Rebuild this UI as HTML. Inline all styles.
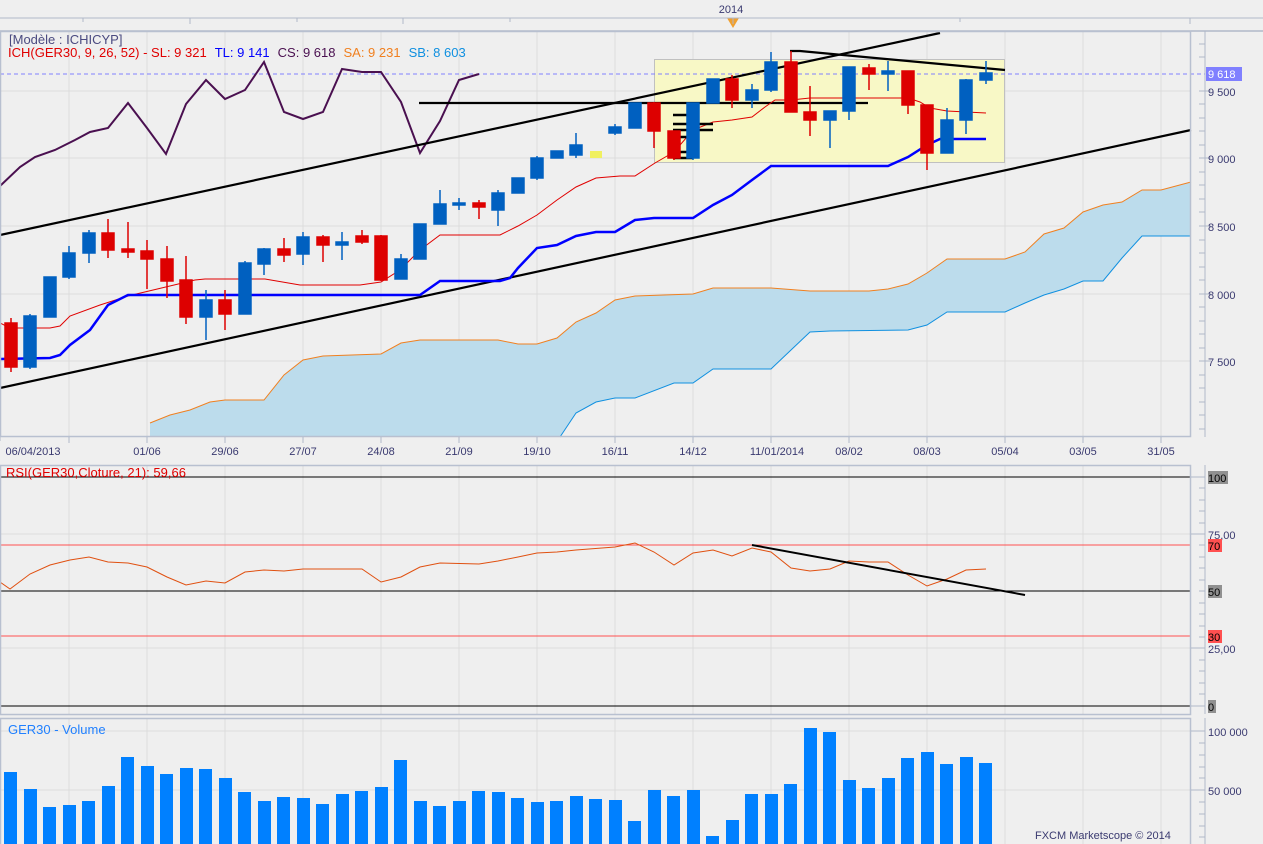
<!DOCTYPE html>
<html><head><meta charset="utf-8"><style>
html,body{margin:0;padding:0;background:#efefef;}
svg{display:block;font-family:"Liberation Sans",sans-serif;}
</style></head><body>
<svg width="1263" height="844" viewBox="0 0 1263 844" xmlns="http://www.w3.org/2000/svg">
<rect width="1263" height="844" fill="#efefef"/>
<!-- top ruler -->
<text x="731" y="13" font-size="11" fill="#3a3a70" text-anchor="middle">2014</text>
<path d="M727 18 L739 18 L733 28 Z" fill="#f0a030"/>
<line x1="0" y1="18" x2="1263" y2="18" stroke="#b0b8c8"/>
<line x1="0" y1="31" x2="1263" y2="31" stroke="#b0b8c8" stroke-width="1.5"/>
<g stroke="#b0b8c8"><line x1="83" y1="18" x2="83" y2="22"/><line x1="190" y1="18" x2="190" y2="24"/><line x1="297" y1="18" x2="297" y2="22"/><line x1="403" y1="18" x2="403" y2="24"/><line x1="510" y1="18" x2="510" y2="22"/><line x1="733" y1="18" x2="733" y2="24"/><line x1="960" y1="18" x2="960" y2="22"/><line x1="1190" y1="18" x2="1190" y2="24"/></g>

<!-- main panel grid -->
<g stroke="#dcdcdc" stroke-width="1">
<line x1="0" y1="91" x2="1191" y2="91"/><line x1="0" y1="158" x2="1191" y2="158"/><line x1="0" y1="226" x2="1191" y2="226"/><line x1="0" y1="294" x2="1191" y2="294"/><line x1="0" y1="361" x2="1191" y2="361"/>
<path d="M69 31V437M147 31V437M225 31V437M303 31V437M381 31V437M459 31V437M537 31V437M615 31V437M693 31V437M771 31V437M849 31V437M927 31V437M1005 31V437M1083 31V437M1161 31V437"/>
</g>
<!-- cloud -->
<polygon fill="#bcdcec" points="150,437 150,423 170,415 190,410 210,402 225,400 264,400 284,375 303,360 323,356 381,354 401,343 420,340 498,340 518,344 537,344 557,338 576,322 596,313 615,300 635,296 693,294 713,288 771,288 810,291 869,291 888,289 908,284 927,273 947,259 1005,259 1025,252 1044,234 1064,228 1083,212 1103,205 1122,202 1142,190 1161,190 1191,182 1191,236 1142,236 1122,258 1103,281 1083,281 1064,289 1044,295 1025,303 1005,312 947,312 927,325 908,330 830,331 810,332 791,350 771,369 713,369 693,383 674,383 635,398 615,398 596,402 576,413 560,437"/>
<polyline fill="none" stroke="#f08020" stroke-width="1" points="150,423 170,415 190,410 210,402 225,400 264,400 284,375 303,360 323,356 381,354 401,343 420,340 498,340 518,344 537,344 557,338 576,322 596,313 615,300 635,296 693,294 713,288 771,288 810,291 869,291 888,289 908,284 927,273 947,259 1005,259 1025,252 1044,234 1064,228 1083,212 1103,205 1122,202 1142,190 1161,190 1191,182"/>
<polyline fill="none" stroke="#1090e0" stroke-width="1" points="560,437 576,413 596,402 615,398 635,398 674,383 693,383 713,369 771,369 791,350 810,332 830,331 908,330 927,325 947,312 1005,312 1025,303 1044,295 1064,289 1083,281 1103,281 1122,258 1142,236 1191,236"/>
<!-- yellow box -->
<rect x="654.5" y="59.5" width="350" height="103" fill="#f8f8c6" stroke="#c0c0c0"/>
<!-- dashed current price -->
<line x1="0" y1="74" x2="1205" y2="74" stroke="#8080ff" stroke-dasharray="4,3"/>
<!-- chikou -->
<polyline fill="none" stroke="#4a1050" stroke-width="2" points="0,186 20,167 35,157 55,150 75,140 90,132 108,128 128,103 147,128 166,154 186,104 206,80 225,99 245,90 264,62 284,112 303,119 323,112 342,69 362,72 381,72 401,102 420,153 440,121 459,80 479,74"/>
<!-- trendlines -->
<g stroke="#000" stroke-width="2.2" fill="none">
<line x1="0" y1="235" x2="940" y2="33"/>
<line x1="0" y1="388" x2="1191" y2="130"/>
<line x1="419" y1="103" x2="868" y2="103"/>
<polyline points="790,51 800,51 1005,70"/>
</g>
<!-- tenkan -->
<polyline fill="none" stroke="#e00000" stroke-width="1" points="0,323 10,328 50,328 60,326 70,316 100,305 128,296 195,280 205,279 265,279 300,285 360,285 381,282 400,270 420,250 440,235 500,235 518,226 537,215 557,200 576,187 596,178 620,176 635,176 655,163 674,152 693,130 713,122 732,120 752,117 765,107 775,100 791,100 810,98 908,98 920,102 930,108 947,111 986,113"/>
<!-- kijun -->
<polyline fill="none" stroke="#0000ff" stroke-width="2.5" points="0,359 50,358 60,355 70,345 90,330 108,305 128,295 420,295 430,288 440,281 500,281 510,278 518,268 537,248 557,245 576,236 596,232 615,232 635,220 654,218 693,218 713,205 732,195 752,180 771,166 888,166 908,157 927,145 940,139 986,139"/>
<!-- horizontal ticks on candle -->
<g stroke="#000" stroke-width="2.5"><path d="M673 115h20M673 124h40M673 130h40M673 137h20M673 152h20M673 158h20"/></g>
<!-- candles -->
<g stroke-width="1.5">
<g fill="#dd0000" stroke="#dd0000">
<line x1="11" y1="318" x2="11" y2="372"/><rect x="5" y="323" width="12" height="44"/>
<line x1="128" y1="222" x2="128" y2="258"/><rect x="122" y="249" width="12" height="3"/>
<line x1="147" y1="240" x2="147" y2="289"/><rect x="141" y="251" width="12" height="8"/>
<line x1="167" y1="246" x2="167" y2="298"/><rect x="161" y="259" width="12" height="22"/>
<line x1="186" y1="256" x2="186" y2="324"/><rect x="180" y="280" width="12" height="37"/>
<line x1="225" y1="290" x2="225" y2="330"/><rect x="219" y="300" width="12" height="14"/>
<line x1="108" y1="219" x2="108" y2="258"/><rect x="102" y="233" width="12" height="17"/>
<line x1="284" y1="238" x2="284" y2="262"/><rect x="278" y="249" width="12" height="6"/>
<line x1="323" y1="235" x2="323" y2="262"/><rect x="317" y="237" width="12" height="8"/>
<line x1="362" y1="230" x2="362" y2="244"/><rect x="356" y="236" width="12" height="6"/>
<line x1="381" y1="235" x2="381" y2="281"/><rect x="375" y="236" width="12" height="44"/>
<line x1="479" y1="200" x2="479" y2="219"/><rect x="473" y="203" width="12" height="4"/>
<line x1="654" y1="102" x2="654" y2="148"/><rect x="648" y="103" width="12" height="28"/>
<line x1="674" y1="131" x2="674" y2="160"/><rect x="668" y="131" width="12" height="27"/>
<line x1="732" y1="75" x2="732" y2="108"/><rect x="726" y="79" width="12" height="21"/>
<line x1="791" y1="51" x2="791" y2="112"/><rect x="785" y="62" width="12" height="50"/>
<line x1="810" y1="86" x2="810" y2="136"/><rect x="804" y="112" width="12" height="8"/>
<line x1="869" y1="64" x2="869" y2="90"/><rect x="863" y="68" width="12" height="6"/>
<line x1="908" y1="71" x2="908" y2="114"/><rect x="902" y="71" width="12" height="34"/>
<line x1="927" y1="105" x2="927" y2="170"/><rect x="921" y="105" width="12" height="48"/>
</g>
<g fill="#0060c0" stroke="#0060c0">
<line x1="30" y1="314" x2="30" y2="369"/><rect x="24" y="316" width="12" height="51"/>
<rect x="44" y="277" width="12" height="40"/>
<line x1="69" y1="246" x2="69" y2="279"/><rect x="63" y="253" width="12" height="24"/>
<line x1="89" y1="230" x2="89" y2="263"/><rect x="83" y="233" width="12" height="20"/>
<line x1="206" y1="290" x2="206" y2="340"/><rect x="200" y="300" width="12" height="17"/>
<line x1="245" y1="261" x2="245" y2="314"/><rect x="239" y="263" width="12" height="51"/>
<line x1="264" y1="248" x2="264" y2="275"/><rect x="258" y="249" width="12" height="15"/>
<line x1="303" y1="232" x2="303" y2="265"/><rect x="297" y="237" width="12" height="17"/>
<line x1="342" y1="232" x2="342" y2="260"/><rect x="336" y="242" width="12" height="3"/>
<line x1="401" y1="254" x2="401" y2="278"/><rect x="395" y="259" width="12" height="20"/>
<rect x="414" y="224" width="12" height="35"/>
<line x1="440" y1="190" x2="440" y2="224"/><rect x="434" y="204" width="12" height="20"/>
<line x1="459" y1="198" x2="459" y2="210"/><rect x="453" y="203" width="12" height="2"/>
<line x1="498" y1="190" x2="498" y2="226"/><rect x="492" y="193" width="12" height="17"/>
<rect x="512" y="178" width="12" height="15"/>
<line x1="537" y1="156" x2="537" y2="180"/><rect x="531" y="158" width="12" height="20"/>
<rect x="551" y="151" width="12" height="7"/>
<line x1="576" y1="133" x2="576" y2="158"/><rect x="570" y="145" width="12" height="10"/>
<line x1="615" y1="124" x2="615" y2="135"/><rect x="609" y="127" width="12" height="6"/>
<rect x="629" y="103" width="12" height="25"/>
<line x1="693" y1="103" x2="693" y2="160"/><rect x="687" y="103" width="12" height="55"/>
<rect x="707" y="79" width="12" height="24"/>
<line x1="752" y1="84" x2="752" y2="108"/><rect x="746" y="90" width="12" height="10"/>
<line x1="771" y1="52" x2="771" y2="92"/><rect x="765" y="62" width="12" height="28"/>
<line x1="830" y1="111" x2="830" y2="148"/><rect x="824" y="111" width="12" height="9"/>
<line x1="849" y1="67" x2="849" y2="120"/><rect x="843" y="67" width="12" height="44"/>
<line x1="888" y1="61" x2="888" y2="91"/><rect x="882" y="71" width="12" height="3"/>
<line x1="947" y1="108" x2="947" y2="153"/><rect x="941" y="120" width="12" height="33"/>
<line x1="966" y1="79" x2="966" y2="134"/><rect x="960" y="80" width="12" height="40"/>
<line x1="986" y1="61" x2="986" y2="84"/><rect x="980" y="73" width="12" height="7"/>
</g>
<rect x="590" y="151" width="12" height="7" fill="#f0f060" stroke="none"/>
</g>
<!-- labels -->
<text x="9" y="44" font-size="13" fill="#4a4a80">[Modèle : ICHICYP]</text>
<text x="8" y="57" font-size="13"><tspan fill="#e00000">ICH(GER30, 9, 26, 52) -  SL: 9 321</tspan><tspan fill="#0000ff" dx="8">TL: 9 141</tspan><tspan fill="#4a1050" dx="8">CS: 9 618</tspan><tspan fill="#f08020" dx="8">SA: 9 231</tspan><tspan fill="#1090e0" dx="8">SB: 8 603</tspan></text>
<!-- main frame -->
<rect x="0.5" y="31.5" width="1190" height="405" fill="none" stroke="#b8c0d0" stroke-width="1.5"/>
<!-- right axis main -->
<line x1="1205" y1="31" x2="1205" y2="437" stroke="#b0b8c8"/>
<g stroke="#b0b8c8"><path d="M1199 91h12M1199 158h12M1199 226h12M1199 294h12M1199 361h12M1199 44h6M1199 57h6M1199 104h6M1199 118h6M1199 131h6M1199 145h6M1199 172h6M1199 185h6M1199 199h6M1199 212h6M1199 240h6M1199 253h6M1199 267h6M1199 280h6M1199 307h6M1199 321h6M1199 334h6M1199 348h6M1199 375h6M1199 388h6M1199 402h6M1199 415h6M1199 429h6"/></g>
<rect x="1206" y="67" width="36" height="14" fill="#8080ff"/>
<text x="1208" y="78" font-size="11" fill="#fff">9 618</text>
<g font-size="11" fill="#3a3a70"><text x="1208" y="96">9 500</text><text x="1208" y="163">9 000</text><text x="1208" y="231">8 500</text><text x="1208" y="299">8 000</text><text x="1208" y="366">7 500</text></g>
<!-- date axis -->
<g stroke="#b0b8c8"><path d="M0 437V441M69 437V443M147 437V443M225 437V443M303 437V443M381 437V443M459 437V443M537 437V443M615 437V443M693 437V443M771 437V443M849 437V443M927 437V443M1005 437V443M1083 437V443M1161 437V443"/></g>
<g font-size="11" fill="#3a3a70" text-anchor="middle"><text x="33" y="455">06/04/2013</text><text x="147" y="455">01/06</text><text x="225" y="455">29/06</text><text x="303" y="455">27/07</text><text x="381" y="455">24/08</text><text x="459" y="455">21/09</text><text x="537" y="455">19/10</text><text x="615" y="455">16/11</text><text x="693" y="455">14/12</text><text x="777" y="455">11/01/2014</text><text x="849" y="455">08/02</text><text x="927" y="455">08/03</text><text x="1005" y="455">05/04</text><text x="1083" y="455">03/05</text><text x="1161" y="455">31/05</text></g>

<!-- RSI panel -->
<g stroke="#dcdcdc"><path d="M0 534H1191M0 648H1191M69 465V714M147 465V714M225 465V714M303 465V714M381 465V714M459 465V714M537 465V714M615 465V714M693 465V714M771 465V714M849 465V714M927 465V714M1005 465V714M1083 465V714M1161 465V714"/></g>
<line x1="0" y1="477" x2="1191" y2="477" stroke="#000"/>
<line x1="0" y1="591" x2="1191" y2="591" stroke="#000"/>
<line x1="0" y1="706" x2="1191" y2="706" stroke="#000"/>
<line x1="0" y1="545" x2="1191" y2="545" stroke="#ff5050"/>
<line x1="0" y1="636" x2="1191" y2="636" stroke="#ff5050"/>
<polyline fill="none" stroke="#e05010" stroke-width="1" points="0,582 10,589 30,574 50,565 70,560 89,557 108,562 128,563 147,567 167,577 186,585 206,581 225,583 245,572 264,570 284,571 303,569 323,569 362,569 381,582 401,577 420,567 440,563 479,564 498,561 518,557 537,553 557,552 576,550 615,547 635,543 654,552 674,565 693,553 713,550 732,556 752,548 771,552 791,568 810,571 830,569 849,561 869,562 888,562 908,575 927,586 947,579 966,570 986,569"/>
<line x1="752" y1="545" x2="1025" y2="595" stroke="#000" stroke-width="2"/>
<text x="6" y="477" font-size="13" fill="#e00000">RSI(GER30,Cloture, 21): 59,66</text>
<rect x="0.5" y="465.5" width="1190" height="249" fill="none" stroke="#b8c0d0" stroke-width="1.5"/>
<line x1="1205" y1="465" x2="1205" y2="714" stroke="#b0b8c8"/>
<g stroke="#b0b8c8"><path d="M1191 477h14M1191 534h14M1191 648h14M1191 706h14M1199 488h6M1199 500h6M1199 511h6M1199 523h6M1199 545h6M1199 557h6M1199 568h6M1199 580h6M1199 591h6M1199 603h6M1199 614h6M1199 626h6M1199 637h6M1199 660h6M1199 671h6M1199 683h6M1199 694h6"/></g>
<rect x="1208" y="471" width="20" height="13" fill="#909090"/><text x="1208" y="482" font-size="11" fill="#000">100</text>
<text x="1208" y="539" font-size="11" fill="#3a3a70">75,00</text>
<rect x="1208" y="539" width="14" height="13" fill="#ff5050"/><text x="1208" y="550" font-size="11" fill="#000">70</text>
<rect x="1208" y="585" width="14" height="13" fill="#909090"/><text x="1208" y="596" font-size="11" fill="#000">50</text>
<rect x="1208" y="630" width="14" height="13" fill="#ff5050"/><text x="1208" y="641" font-size="11" fill="#000">30</text>
<text x="1208" y="653" font-size="11" fill="#3a3a70">25,00</text>
<rect x="1208" y="700" width="8" height="13" fill="#909090"/><text x="1208" y="711" font-size="11" fill="#000">0</text>

<!-- Volume panel -->
<g stroke="#dcdcdc"><path d="M0 731H1191M0 790H1191M69 718V844M147 718V844M225 718V844M303 718V844M381 718V844M459 718V844M537 718V844M615 718V844M693 718V844M771 718V844M849 718V844M927 718V844M1005 718V844M1083 718V844M1161 718V844"/></g>
<g fill="#0080ff">
<rect x="4" y="772" width="13" height="72"/><rect x="24" y="789" width="13" height="55"/><rect x="43" y="807" width="13" height="37"/><rect x="63" y="805" width="13" height="39"/><rect x="82" y="801" width="13" height="43"/><rect x="102" y="786" width="13" height="58"/><rect x="121" y="757" width="13" height="87"/><rect x="141" y="766" width="13" height="78"/><rect x="160" y="774" width="13" height="70"/><rect x="180" y="768" width="13" height="76"/><rect x="199" y="769" width="13" height="75"/><rect x="219" y="778" width="13" height="66"/><rect x="238" y="792" width="13" height="52"/><rect x="258" y="801" width="13" height="43"/><rect x="277" y="797" width="13" height="47"/><rect x="297" y="798" width="13" height="46"/><rect x="316" y="804" width="13" height="40"/><rect x="336" y="794" width="13" height="50"/><rect x="355" y="791" width="13" height="53"/><rect x="375" y="787" width="13" height="57"/><rect x="394" y="760" width="13" height="84"/><rect x="414" y="801" width="13" height="43"/><rect x="433" y="806" width="13" height="38"/><rect x="453" y="801" width="13" height="43"/><rect x="472" y="791" width="13" height="53"/><rect x="492" y="792" width="13" height="52"/><rect x="511" y="798" width="13" height="46"/><rect x="531" y="802" width="13" height="42"/><rect x="550" y="801" width="13" height="43"/><rect x="570" y="796" width="13" height="48"/><rect x="589" y="799" width="13" height="45"/><rect x="609" y="800" width="13" height="44"/><rect x="628" y="821" width="13" height="23"/><rect x="648" y="790" width="13" height="54"/><rect x="667" y="796" width="13" height="48"/><rect x="687" y="790" width="13" height="54"/><rect x="706" y="836" width="13" height="8"/><rect x="726" y="820" width="13" height="24"/><rect x="745" y="794" width="13" height="50"/><rect x="765" y="794" width="13" height="50"/><rect x="784" y="784" width="13" height="60"/><rect x="804" y="728" width="13" height="116"/><rect x="823" y="732" width="13" height="112"/><rect x="843" y="780" width="13" height="64"/><rect x="862" y="788" width="13" height="56"/><rect x="882" y="778" width="13" height="66"/><rect x="901" y="758" width="13" height="86"/><rect x="921" y="752" width="13" height="92"/><rect x="940" y="764" width="13" height="80"/><rect x="960" y="757" width="13" height="87"/><rect x="979" y="763" width="13" height="81"/>
</g>
<text x="8" y="734" font-size="13" fill="#2080ff">GER30 - Volume</text>
<text x="1035" y="839" font-size="11" fill="#3a3a70">FXCM Marketscope © 2014</text>
<rect x="0.5" y="718.5" width="1190" height="130" fill="none" stroke="#b8c0d0" stroke-width="1.5"/>
<line x1="1205" y1="718" x2="1205" y2="844" stroke="#b0b8c8"/>
<g stroke="#b0b8c8"><path d="M1191 731h14M1191 790h14M1199 743h6M1199 755h6M1199 767h6M1199 778h6M1199 802h6M1199 814h6M1199 826h6M1199 837h6"/></g>
<text x="1208" y="736" font-size="11" fill="#3a3a70">100 000</text>
<text x="1208" y="795" font-size="11" fill="#3a3a70">50 000</text>
</svg>
</body></html>
